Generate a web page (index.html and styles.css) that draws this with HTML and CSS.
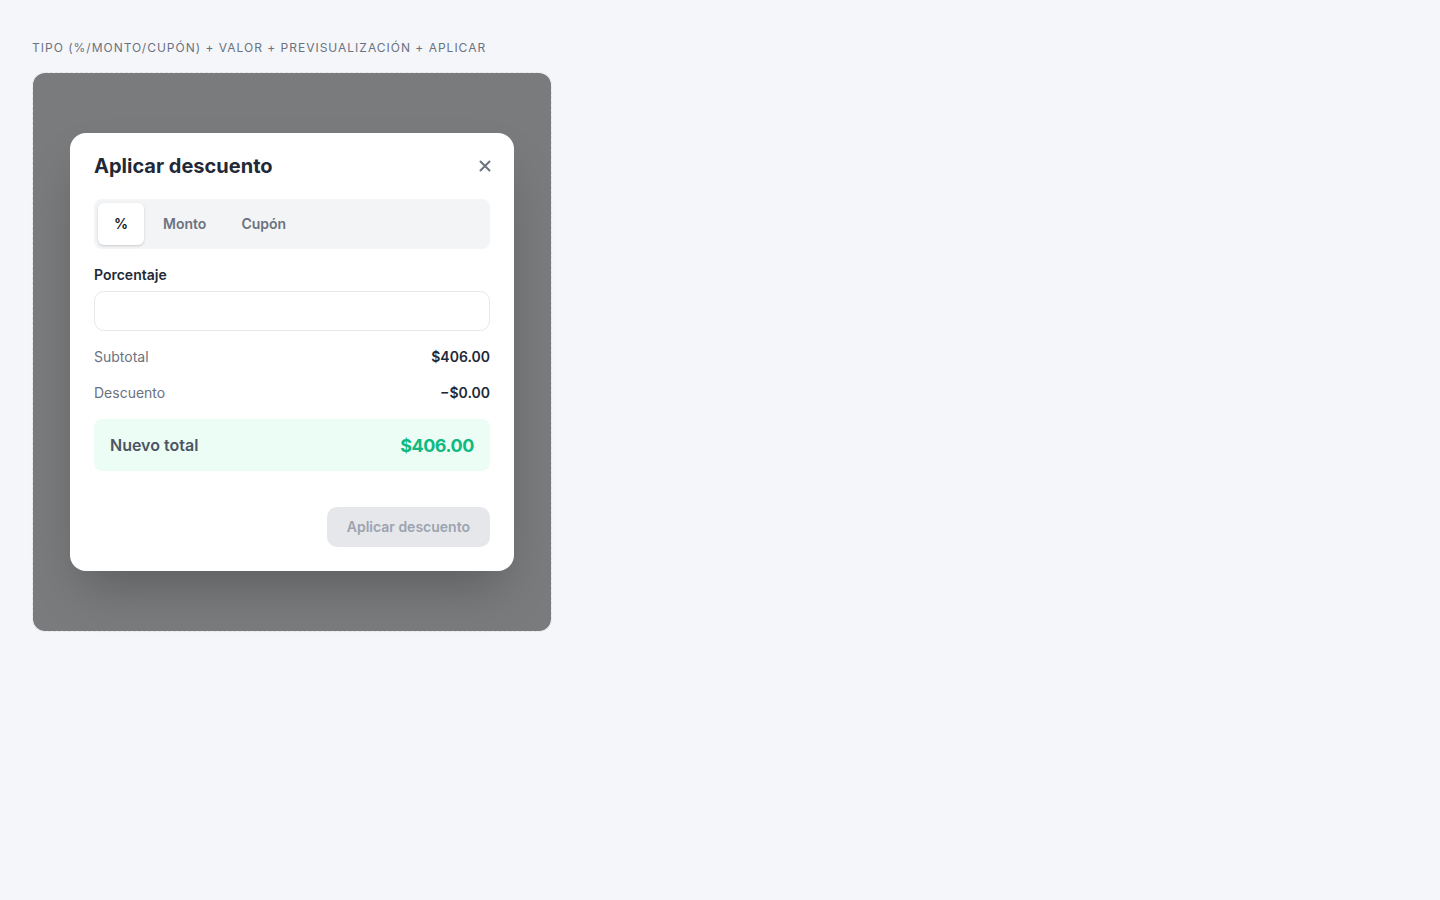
FILE: index.html
```html
<!DOCTYPE html>
<html lang="es">
<head>
<meta charset="utf-8">
<title>Aplicar descuento</title>
<link rel="stylesheet" href="styles.css">
</head>
<body>
<div class="page">
  <div class="caption">TIPO (%/MONTO/CUPÓN) + VALOR + PREVISUALIZACIÓN + APLICAR</div>
  <div class="frame">
    <div class="modal">
      <div class="modal-head">
        <h2 class="modal-title">Aplicar descuento</h2>
        <button class="close" aria-label="Cerrar">
          <svg width="12" height="12" viewBox="0 0 12 12" fill="none" stroke="#6b7280" stroke-width="2" stroke-linecap="round"><path d="M1.5 1.5l9 9M10.5 1.5l-9 9"/></svg>
        </button>
      </div>
      <div class="tabs">
        <button class="tab active">%</button>
        <button class="tab">Monto</button>
        <button class="tab">Cupón</button>
      </div>
      <label class="field-label">Porcentaje</label>
      <input class="field-input" type="text">
      <div class="row"><span class="row-label">Subtotal</span><span class="row-value">$406.00</span></div>
      <div class="row"><span class="row-label">Descuento</span><span class="row-value">−$0.00</span></div>
      <div class="total"><span class="total-label">Nuevo total</span><span class="total-value">$406.00</span></div>
      <div class="actions"><button class="apply" disabled>Aplicar descuento</button></div>
    </div>
  </div>
</div>
</body>
</html>
```
FILE: styles.css
```css
* { box-sizing: border-box; }
html, body { margin: 0; padding: 0; }
body {
  background: #f5f6fa;
  font-family: Inter, "Noto Sans", sans-serif;
  color: #1f2937;
}
.page { padding: 40px 32px; }
.caption {
  font-size: 12px;
  line-height: 16px;
  letter-spacing: 1px;
  color: #6b7280;
  margin-bottom: 16px;
}
.frame {
  width: 520px;
  height: 560px;
  border: 1px dashed #e2e4ea;
  border-radius: 13px;
  background: rgba(0,0,0,0.5);
  background-clip: padding-box;
  display: flex;
  align-items: center;
  justify-content: center;
}
.modal {
  width: 444px;
  background: #fff;
  border-radius: 16px;
  padding: 24px;
  box-shadow: 0 25px 50px -12px rgba(0,0,0,0.25);
}
.modal-head {
  display: flex;
  align-items: center;
  justify-content: space-between;
  height: 18px;
  margin-bottom: 24px;
}
.modal-title {
  margin: 0;
  font-size: 20px;
  font-weight: 700;
  color: #1f2937;
}
.close {
  border: 0;
  background: none;
  padding: 0;
  width: 12px;
  height: 12px;
  display: flex;
  margin-right: -1px;
  cursor: pointer;
}
.tabs {
  display: flex;
  gap: 3px;
  background: #f3f4f6;
  border-radius: 8px;
  padding: 4px;
  margin-bottom: 17px;
}
.tab {
  border: 0;
  background: none;
  font-family: inherit;
  font-size: 14px;
  font-weight: 600;
  color: #6b7280;
  height: 42px;
  padding: 0 16px 2px;
  border-radius: 6px;
}
.tab.active {
  background: #fff;
  color: #111827;
  box-shadow: 0 1px 3px rgba(0,0,0,0.12), 0 1px 2px rgba(0,0,0,0.06);
}
.field-label {
  display: block;
  font-size: 14px;
  font-weight: 600;
  line-height: 18px;
  color: #1f2937;
  margin-bottom: 7px;
}
.field-input {
  display: block;
  width: 100%;
  height: 40px;
  border: 1px solid #e5e7eb;
  border-radius: 10px;
  background: #fff;
  margin-bottom: 15px;
  font-family: inherit;
  font-size: 14px;
}
.row {
  display: flex;
  justify-content: space-between;
  align-items: center;
  height: 20px;
  font-size: 14px;
  margin-bottom: 16px;
}
.row + .row { margin-bottom: 17px; }
.row-label { color: #6b7280; }
.row-value { font-weight: 600; color: #1f2937; }
.total {
  display: flex;
  justify-content: space-between;
  align-items: center;
  height: 52px;
  padding: 0 16px;
  background: #ecfdf5;
  border-radius: 8px;
  margin-bottom: 36px;
}
.total-label { font-size: 16px; font-weight: 600; color: #4b5563; }
.total-value { font-size: 18px; font-weight: 700; color: #10b981; letter-spacing: -0.45px; }
.actions { display: flex; justify-content: flex-end; }
.apply {
  border: 0;
  height: 40px;
  padding: 0 20px 2px;
  border-radius: 10px;
  background: #e5e7eb;
  color: #9ca3af;
  font-family: inherit;
  font-size: 14px;
  font-weight: 600;
}
```
